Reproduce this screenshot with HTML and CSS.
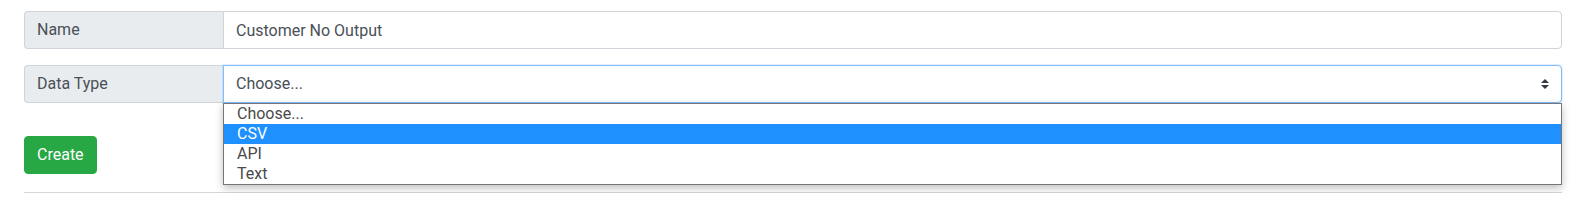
FILE: index.html
```html
<!DOCTYPE html>
<html lang="en">
<head>
  <meta charset="UTF-8" />
  <title>New Output</title>
  <link rel="stylesheet" href="styles.css">
</head>
<body>

  <div class="page">
    <div class="input-group">
      <span class="group-label">Name</span>
      <input type="text" class="group-field" value="Customer No Output" />
    </div>

    <div class="input-group type-row">
      <span class="group-label">Data Type</span>
      <div class="select-wrap">
        <div class="group-field select-box">
          <span>Choose...</span>
          <svg class="select-arrow" width="8" height="10" viewBox="0 0 4 5"><path fill="#343a40" d="M2 0L0 2h4zm0 5L0 3h4z"/></svg>
        </div>
        <ul class="options">
          <li>Choose...</li>
          <li class="active">CSV</li>
          <li>API</li>
          <li>Text</li>
        </ul>
      </div>
    </div>

    <button type="submit" class="btn-create">Create</button>
    <hr class="divider" />
  </div>

</body>
</html>
```

FILE: styles.css
```css
body {
  font-family: Roboto, "Liberation Sans", Arial, sans-serif;
  font-size: 16px;
  line-height: 1.5;
  color: #495057;
  background: white;
  margin: 0;
}

.page {
  padding: 11px 15px 0 24px;
}

.input-group {
  display: flex;
  height: 38px;
  margin-bottom: 16px;
}

.type-row {
  margin-bottom: 33px;
}

.group-label {
  width: 199px;
  box-sizing: border-box;
  padding: 6px 12px;
  background: #e9ecef;
  border: 1px solid #ced4da;
  border-right: none;
  border-radius: 4px 0 0 4px;
  display: flex;
  align-items: center;
}

.group-field {
  flex: 1;
  box-sizing: border-box;
  height: 38px;
  padding: 6px 12px;
  border: 1px solid #ced4da;
  border-radius: 0 4px 4px 0;
  font: inherit;
  color: #495057;
  background: white;
  margin: 0;
}

.select-wrap {
  flex: 1;
  position: relative;
  display: flex;
}

.select-box {
  display: flex;
  align-items: center;
  justify-content: space-between;
  border-color: #80bdff;
  box-shadow: 0 0 0 1px rgba(0, 123, 255, 0.12);
}

.options {
  position: absolute;
  top: 100%;
  left: 0;
  right: 0;
  margin: 0;
  padding: 0;
  list-style: none;
  background: white;
  border: 1px solid #767676;
  box-shadow: 0 3px 8px rgba(0, 0, 0, 0.25);
  z-index: 2;
}

.options li {
  height: 20px;
  line-height: 20px;
  padding: 0 13px;
  color: #4a4a4a;
}

.options li.active {
  background: #1e90ff;
  color: white;
}

.btn-create {
  background-color: #28a745;
  color: white;
  border: 1px solid #28a745;
  font: inherit;
  padding: 6px 12px;
  border-radius: 4px;
  cursor: pointer;
  height: 38px;
  display: block;
}

.divider {
  margin: 18px 0 0;
  border: none;
  border-top: 1px solid #d6d6d6;
}
```
